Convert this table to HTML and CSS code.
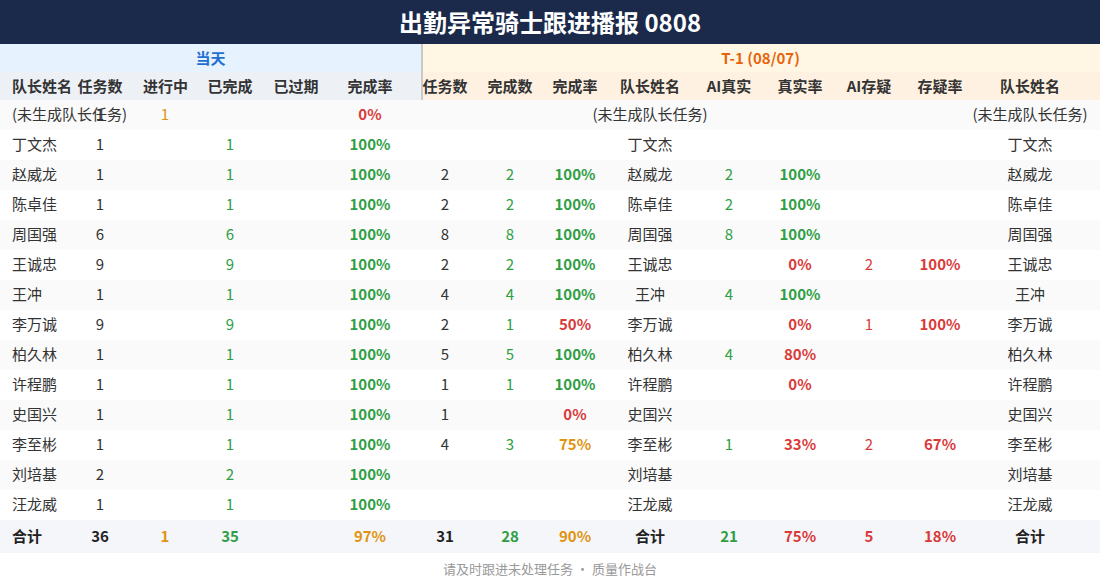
FILE: index.html
```html
<!DOCTYPE html>
<html lang="zh">
<head>
<meta charset="utf-8">
<title>出勤异常骑士跟进播报 0808</title>
<link rel="stylesheet" href="styles.css">
</head>
<body>
<div class="page">
  <header class="title-bar">出勤异常骑士跟进播报 0808</header>
  <table class="report">
    <colgroup>
      <col class="w57"><col class="w86"><col class="w44"><col class="w86"><col class="w46"><col class="w102">
      <col class="w48"><col class="w82"><col class="w48"><col class="w102"><col class="w56"><col class="w86"><col class="w52"><col class="w90"><col class="w115">
    </colgroup>
    <thead>
      <tr class="group-row">
        <th colspan="6" class="grp-today">当天</th>
        <th colspan="9" class="grp-prev split">T-1 (08/07)</th>
      </tr>
      <tr class="head-row">
        <th class="left today">队长姓名</th>
        <th class="today">任务数</th>
        <th class="today">进行中</th>
        <th class="today">已完成</th>
        <th class="today">已过期</th>
        <th class="today">完成率</th>
        <th class="prev split">任务数</th>
        <th class="prev">完成数</th>
        <th class="prev">完成率</th>
        <th class="prev">队长姓名</th>
        <th class="prev">AI真实</th>
        <th class="prev">真实率</th>
        <th class="prev">AI存疑</th>
        <th class="prev">存疑率</th>
        <th class="prev last">队长姓名</th>
      </tr>
    </thead>
    <tbody>
      <tr><td class="left">(未生成队长任务)</td><td>1</td><td class="orange">1</td><td></td><td></td><td class="red b">0%</td><td></td><td></td><td></td><td><span class="spill">(未生成队长任务)</span></td><td></td><td></td><td></td><td></td><td class="last"><span class="spill">(未生成队长任务)</span></td></tr>
      <tr><td class="left">丁文杰</td><td>1</td><td></td><td class="green">1</td><td></td><td class="green b">100%</td><td></td><td></td><td></td><td>丁文杰</td><td></td><td></td><td></td><td></td><td class="last">丁文杰</td></tr>
      <tr><td class="left">赵威龙</td><td>1</td><td></td><td class="green">1</td><td></td><td class="green b">100%</td><td>2</td><td class="green">2</td><td class="green b">100%</td><td>赵威龙</td><td class="green">2</td><td class="green b">100%</td><td></td><td></td><td class="last">赵威龙</td></tr>
      <tr><td class="left">陈卓佳</td><td>1</td><td></td><td class="green">1</td><td></td><td class="green b">100%</td><td>2</td><td class="green">2</td><td class="green b">100%</td><td>陈卓佳</td><td class="green">2</td><td class="green b">100%</td><td></td><td></td><td class="last">陈卓佳</td></tr>
      <tr><td class="left">周国强</td><td>6</td><td></td><td class="green">6</td><td></td><td class="green b">100%</td><td>8</td><td class="green">8</td><td class="green b">100%</td><td>周国强</td><td class="green">8</td><td class="green b">100%</td><td></td><td></td><td class="last">周国强</td></tr>
      <tr><td class="left">王诚忠</td><td>9</td><td></td><td class="green">9</td><td></td><td class="green b">100%</td><td>2</td><td class="green">2</td><td class="green b">100%</td><td>王诚忠</td><td></td><td class="red b">0%</td><td class="red">2</td><td class="red b">100%</td><td class="last">王诚忠</td></tr>
      <tr><td class="left">王冲</td><td>1</td><td></td><td class="green">1</td><td></td><td class="green b">100%</td><td>4</td><td class="green">4</td><td class="green b">100%</td><td>王冲</td><td class="green">4</td><td class="green b">100%</td><td></td><td></td><td class="last">王冲</td></tr>
      <tr><td class="left">李万诚</td><td>9</td><td></td><td class="green">9</td><td></td><td class="green b">100%</td><td>2</td><td class="green">1</td><td class="red b">50%</td><td>李万诚</td><td></td><td class="red b">0%</td><td class="red">1</td><td class="red b">100%</td><td class="last">李万诚</td></tr>
      <tr><td class="left">柏久林</td><td>1</td><td></td><td class="green">1</td><td></td><td class="green b">100%</td><td>5</td><td class="green">5</td><td class="green b">100%</td><td>柏久林</td><td class="green">4</td><td class="red b">80%</td><td></td><td></td><td class="last">柏久林</td></tr>
      <tr><td class="left">许程鹏</td><td>1</td><td></td><td class="green">1</td><td></td><td class="green b">100%</td><td>1</td><td class="green">1</td><td class="green b">100%</td><td>许程鹏</td><td></td><td class="red b">0%</td><td></td><td></td><td class="last">许程鹏</td></tr>
      <tr><td class="left">史国兴</td><td>1</td><td></td><td class="green">1</td><td></td><td class="green b">100%</td><td>1</td><td></td><td class="red b">0%</td><td>史国兴</td><td></td><td></td><td></td><td></td><td class="last">史国兴</td></tr>
      <tr><td class="left">李至彬</td><td>1</td><td></td><td class="green">1</td><td></td><td class="green b">100%</td><td>4</td><td class="green">3</td><td class="orange b">75%</td><td>李至彬</td><td class="green">1</td><td class="red b">33%</td><td class="red">2</td><td class="red b">67%</td><td class="last">李至彬</td></tr>
      <tr><td class="left">刘培基</td><td>2</td><td></td><td class="green">2</td><td></td><td class="green b">100%</td><td></td><td></td><td></td><td>刘培基</td><td></td><td></td><td></td><td></td><td class="last">刘培基</td></tr>
      <tr><td class="left">汪龙威</td><td>1</td><td></td><td class="green">1</td><td></td><td class="green b">100%</td><td></td><td></td><td></td><td>汪龙威</td><td></td><td></td><td></td><td></td><td class="last">汪龙威</td></tr>
    </tbody>
    <tfoot>
      <tr class="total-row"><td class="left">合计</td><td>36</td><td class="orange">1</td><td class="green">35</td><td></td><td class="orange">97%</td><td>31</td><td class="green">28</td><td class="orange">90%</td><td>合计</td><td class="green">21</td><td class="red">75%</td><td class="red">5</td><td class="red">18%</td><td class="last">合计</td></tr>
    </tfoot>
  </table>
  <footer class="foot-note">请及时跟进未处理任务 · 质量作战台</footer>
</div>
</body>
</html>
```

FILE: styles.css
```css
html, body {
  margin: 0;
  padding: 0;
  background: #ffffff;
}

body {
  font-family: "Noto Sans CJK SC", "Noto Sans", sans-serif;
  color: #333333;
}

.page {
  width: 1100px;
}

.title-bar {
  height: 44px;
  background: #1b2a4a;
  color: #ffffff;
  font-size: 24px;
  font-weight: 700;
  line-height: 44px;
  text-align: center;
}

.report {
  width: 1100px;
  border-collapse: collapse;
  table-layout: fixed;
}

.w44 { width: 44px; }
.w46 { width: 46px; }
.w48 { width: 48px; }
.w52 { width: 52px; }
.w56 { width: 56px; }
.w57 { width: 57px; }
.w82 { width: 82px; }
.w86 { width: 86px; }
.w90 { width: 90px; }
.w102 { width: 102px; }
.w115 { width: 115px; }

.report th,
.report td {
  padding: 0;
  text-align: center;
  vertical-align: middle;
  white-space: nowrap;
  overflow: visible;
  font-size: 15px;
  line-height: 20px;
}

.report .left {
  text-align: left;
  padding-left: 12px;
}

.report .last {
  padding-right: 25px;
}

/* long text that is wider than its column stays centred on it */
.spill {
  display: inline-block;
  margin: 0 -30px;
}

.group-row th {
  height: 28px;
  font-size: 15px;
  font-weight: 700;
}

.grp-today {
  background: #e6f2fe;
  color: #1f6fd0;
}

.grp-prev {
  background: #fff7e4;
  color: #e8640c;
}

.head-row th {
  height: 28px;
  font-weight: 700;
  color: #333333;
}

.head-row .today {
  background: #edf0f5;
}

.head-row .prev {
  background: #fef1e1;
}

.split {
  box-shadow: inset 2px 0 0 #c9c9c9;
}

.report tbody td {
  height: 28px;
  padding-bottom: 2px;
  color: #333333;
}

.report tbody tr:nth-child(odd) {
  background: #fafafa;
}

.report tbody tr:nth-child(even) {
  background: #ffffff;
}

.total-row {
  background: #f5f6fa;
}

.total-row td {
  height: 31px;
  padding-bottom: 2px;
  font-weight: 700;
  color: #222222;
}

.report td.green { color: #2f9e44; }
.report td.red { color: #d93a3a; }
.report td.orange { color: #e0940f; }
.report td.b { font-weight: 700; }

.foot-note {
  padding-top: 6px;
  text-align: center;
  font-size: 13px;
  line-height: 20px;
  color: #999999;
}
```
